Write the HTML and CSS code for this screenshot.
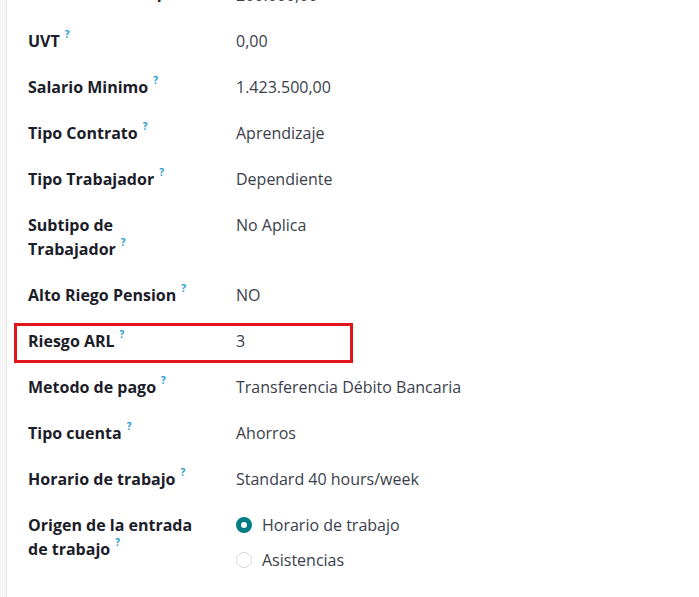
FILE: index.html
```html
<!DOCTYPE html>
<html lang="es">
<head>
<meta charset="utf-8">
<title>Formulario</title>
<link rel="stylesheet" href="styles.css">
</head>
<body>
<div class="page">
  <div class="side"></div>
  <div class="sheet">
    <div class="field top">
      <div class="label">Valor Hora Tiempo<sup>?</sup></div>
      <div class="value">200.000,00</div>
    </div>
    <div class="field">
      <div class="label">UVT<sup>?</sup></div>
      <div class="value">0,00</div>
    </div>
    <div class="field">
      <div class="label">Salario Minimo<sup>?</sup></div>
      <div class="value">1.423.500,00</div>
    </div>
    <div class="field">
      <div class="label">Tipo Contrato<sup>?</sup></div>
      <div class="value">Aprendizaje</div>
    </div>
    <div class="field">
      <div class="label">Tipo Trabajador<sup>?</sup></div>
      <div class="value">Dependiente</div>
    </div>
    <div class="field">
      <div class="label">Subtipo de<br>Trabajador<sup>?</sup></div>
      <div class="value">No Aplica</div>
    </div>
    <div class="field">
      <div class="label">Alto Riego Pension<sup>?</sup></div>
      <div class="value">NO</div>
    </div>
    <div class="field highlighted">
      <div class="label">Riesgo ARL<sup>?</sup></div>
      <div class="value">3</div>
      <div class="mark"></div>
    </div>
    <div class="field">
      <div class="label">Metodo de pago<sup>?</sup></div>
      <div class="value">Transferencia Débito Bancaria</div>
    </div>
    <div class="field">
      <div class="label">Tipo cuenta<sup>?</sup></div>
      <div class="value">Ahorros</div>
    </div>
    <div class="field">
      <div class="label">Horario de trabajo<sup>?</sup></div>
      <div class="value">Standard 40 hours/week</div>
    </div>
    <div class="field">
      <div class="label">Origen de la entrada<br>de trabajo<sup>?</sup></div>
      <div class="value radios">
        <div class="radio checked"><span class="dot"></span>Horario de trabajo</div>
        <div class="radio"><span class="dot"></span>Asistencias</div>
      </div>
    </div>
  </div>
</div>
</body>
</html>
```

FILE: styles.css
```css
* { box-sizing: border-box; }
html, body {
  margin: 0;
  padding: 0;
  background: #ffffff;
  height: 100%;
}
body {
  font-family: "Open Sans", "Noto Sans", sans-serif;
  font-size: 16px;
  overflow: hidden;
}
.page {
  display: flex;
  height: 597px;
}
.side {
  width: 7px;
  flex: none;
  background: #f7f7f8;
  border-right: 1px solid #e4e4e7;
}
.sheet {
  flex: 1;
  padding-left: 21px;
  margin-top: -28px;
}
.field {
  position: relative;
  display: flex;
  padding: 11px 0;
  line-height: 24px;
}
.field.top .label {
  margin-top: -3px;
}
.label {
  width: 208px;
  flex: none;
  font-weight: 700;
  color: #1b1d29;
}
.label sup {
  font-size: 10px;
  font-weight: 700;
  color: #1f9bd1;
  margin-left: 5px;
  vertical-align: top;
  line-height: 14px;
  position: relative;
  top: -2px;
}
.value {
  color: #3a3e4b;
}
.mark {
  position: absolute;
  left: -14px;
  top: 5px;
  width: 339px;
  height: 40px;
  border: 3px solid #e4141d;
}
.radios {
  display: flex;
  flex-direction: column;
  gap: 11px;
}
.radio {
  display: flex;
  align-items: center;
  gap: 10px;
}
.dot {
  width: 16px;
  height: 16px;
  border-radius: 50%;
  border: 1px solid #d8d8dc;
  background: #fff;
  flex: none;
}
.radio.checked .dot {
  border: 5px solid #017e84;
  background: #fff;
}
```
